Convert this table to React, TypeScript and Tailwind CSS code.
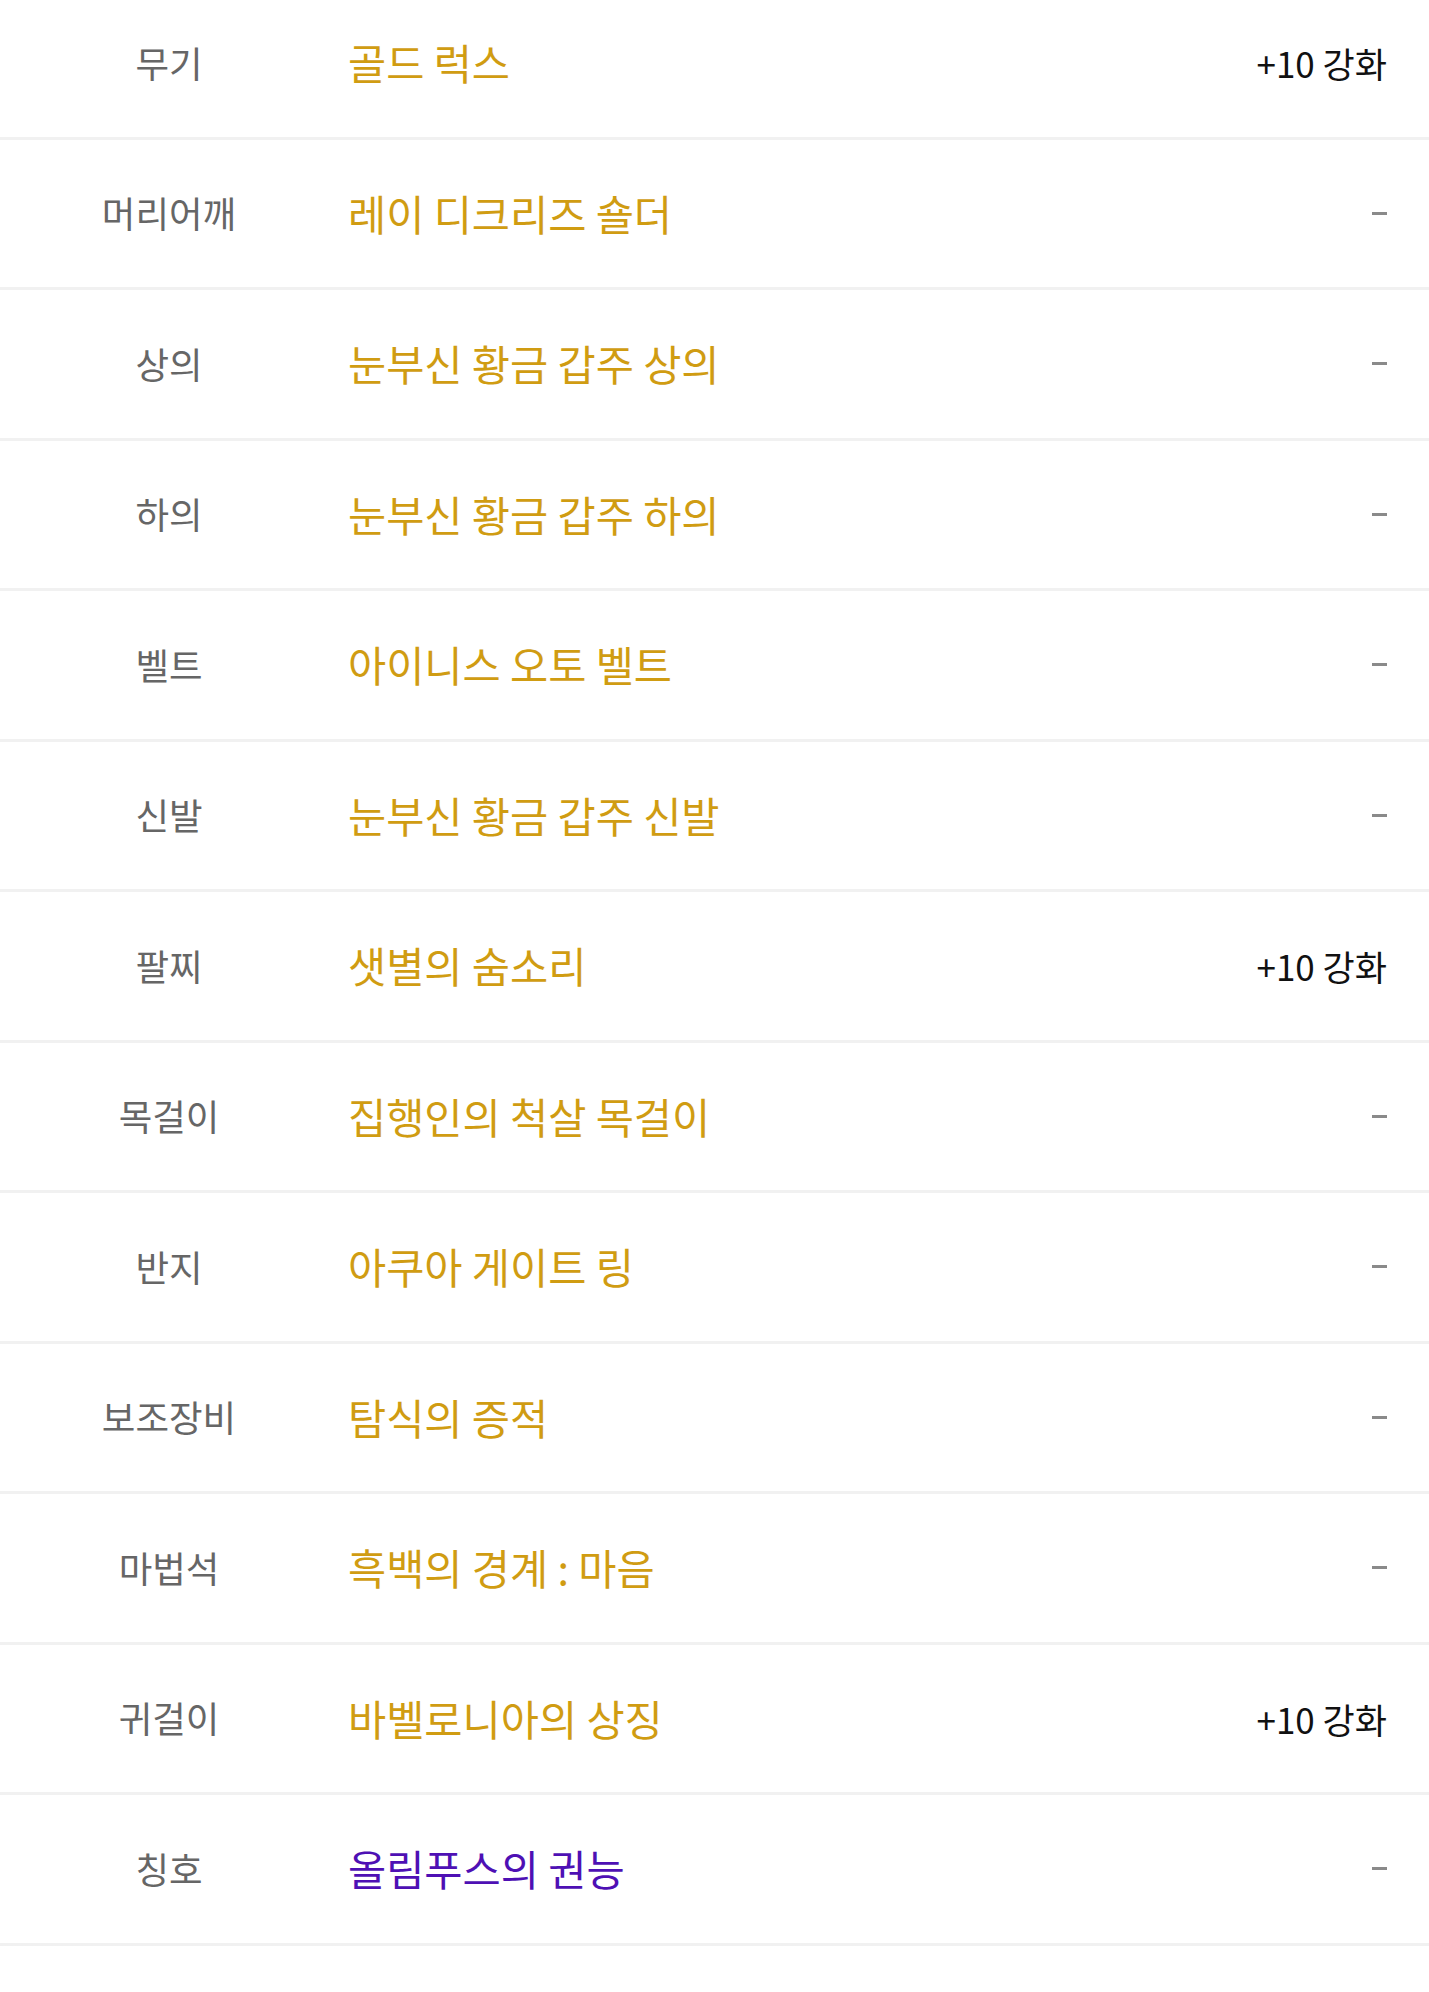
import React from "react";

type Row = { slot: string; name: string; enh?: string; purple?: boolean };

const rows: Row[] = [
  { slot: "무기", name: "골드 럭스", enh: "+10 강화" },
  { slot: "머리어깨", name: "레이 디크리즈 숄더" },
  { slot: "상의", name: "눈부신 황금 갑주 상의" },
  { slot: "하의", name: "눈부신 황금 갑주 하의" },
  { slot: "벨트", name: "아이니스 오토 벨트" },
  { slot: "신발", name: "눈부신 황금 갑주 신발" },
  { slot: "팔찌", name: "샛별의 숨소리", enh: "+10 강화" },
  { slot: "목걸이", name: "집행인의 척살 목걸이" },
  { slot: "반지", name: "아쿠아 게이트 링" },
  { slot: "보조장비", name: "탐식의 증적" },
  { slot: "마법석", name: "흑백의 경계 : 마음" },
  { slot: "귀걸이", name: "바벨로니아의 상징", enh: "+10 강화" },
  { slot: "칭호", name: "올림푸스의 권능", purple: true },
];

export default function App() {
  return (
    <div
      className="w-[1429px] h-[1992px] overflow-hidden bg-white"
      style={{ fontFamily: '"Noto Sans CJK KR", "Noto Sans", Roboto, sans-serif' }}
    >
      <div className="mt-[-11px] flex flex-col">
        {rows.map((r, i) => (
          <div
            key={i}
            className="flex items-center h-[150.5px] border-b-[3px] border-[#f1f1f1]"
          >
            <div className="w-[338px] shrink-0 text-center text-[36.5px] leading-none text-[#666666]">
              {r.slot}
            </div>
            <div
              className={
                "ml-[10px] flex-1 text-[41.5px] leading-none " +
                (r.purple ? "text-[#4e10b4]" : "text-[#d09c12]")
              }
            >
              {r.name}
            </div>
            <div className="pr-[42px] leading-none">
              {r.enh ? (
                <span className="text-[35px] text-[#111111]">{r.enh}</span>
              ) : (
                <span className="block w-[15px] h-[3px] bg-[#8a8a8a]" />
              )}
            </div>
          </div>
        ))}
      </div>
    </div>
  );
}
